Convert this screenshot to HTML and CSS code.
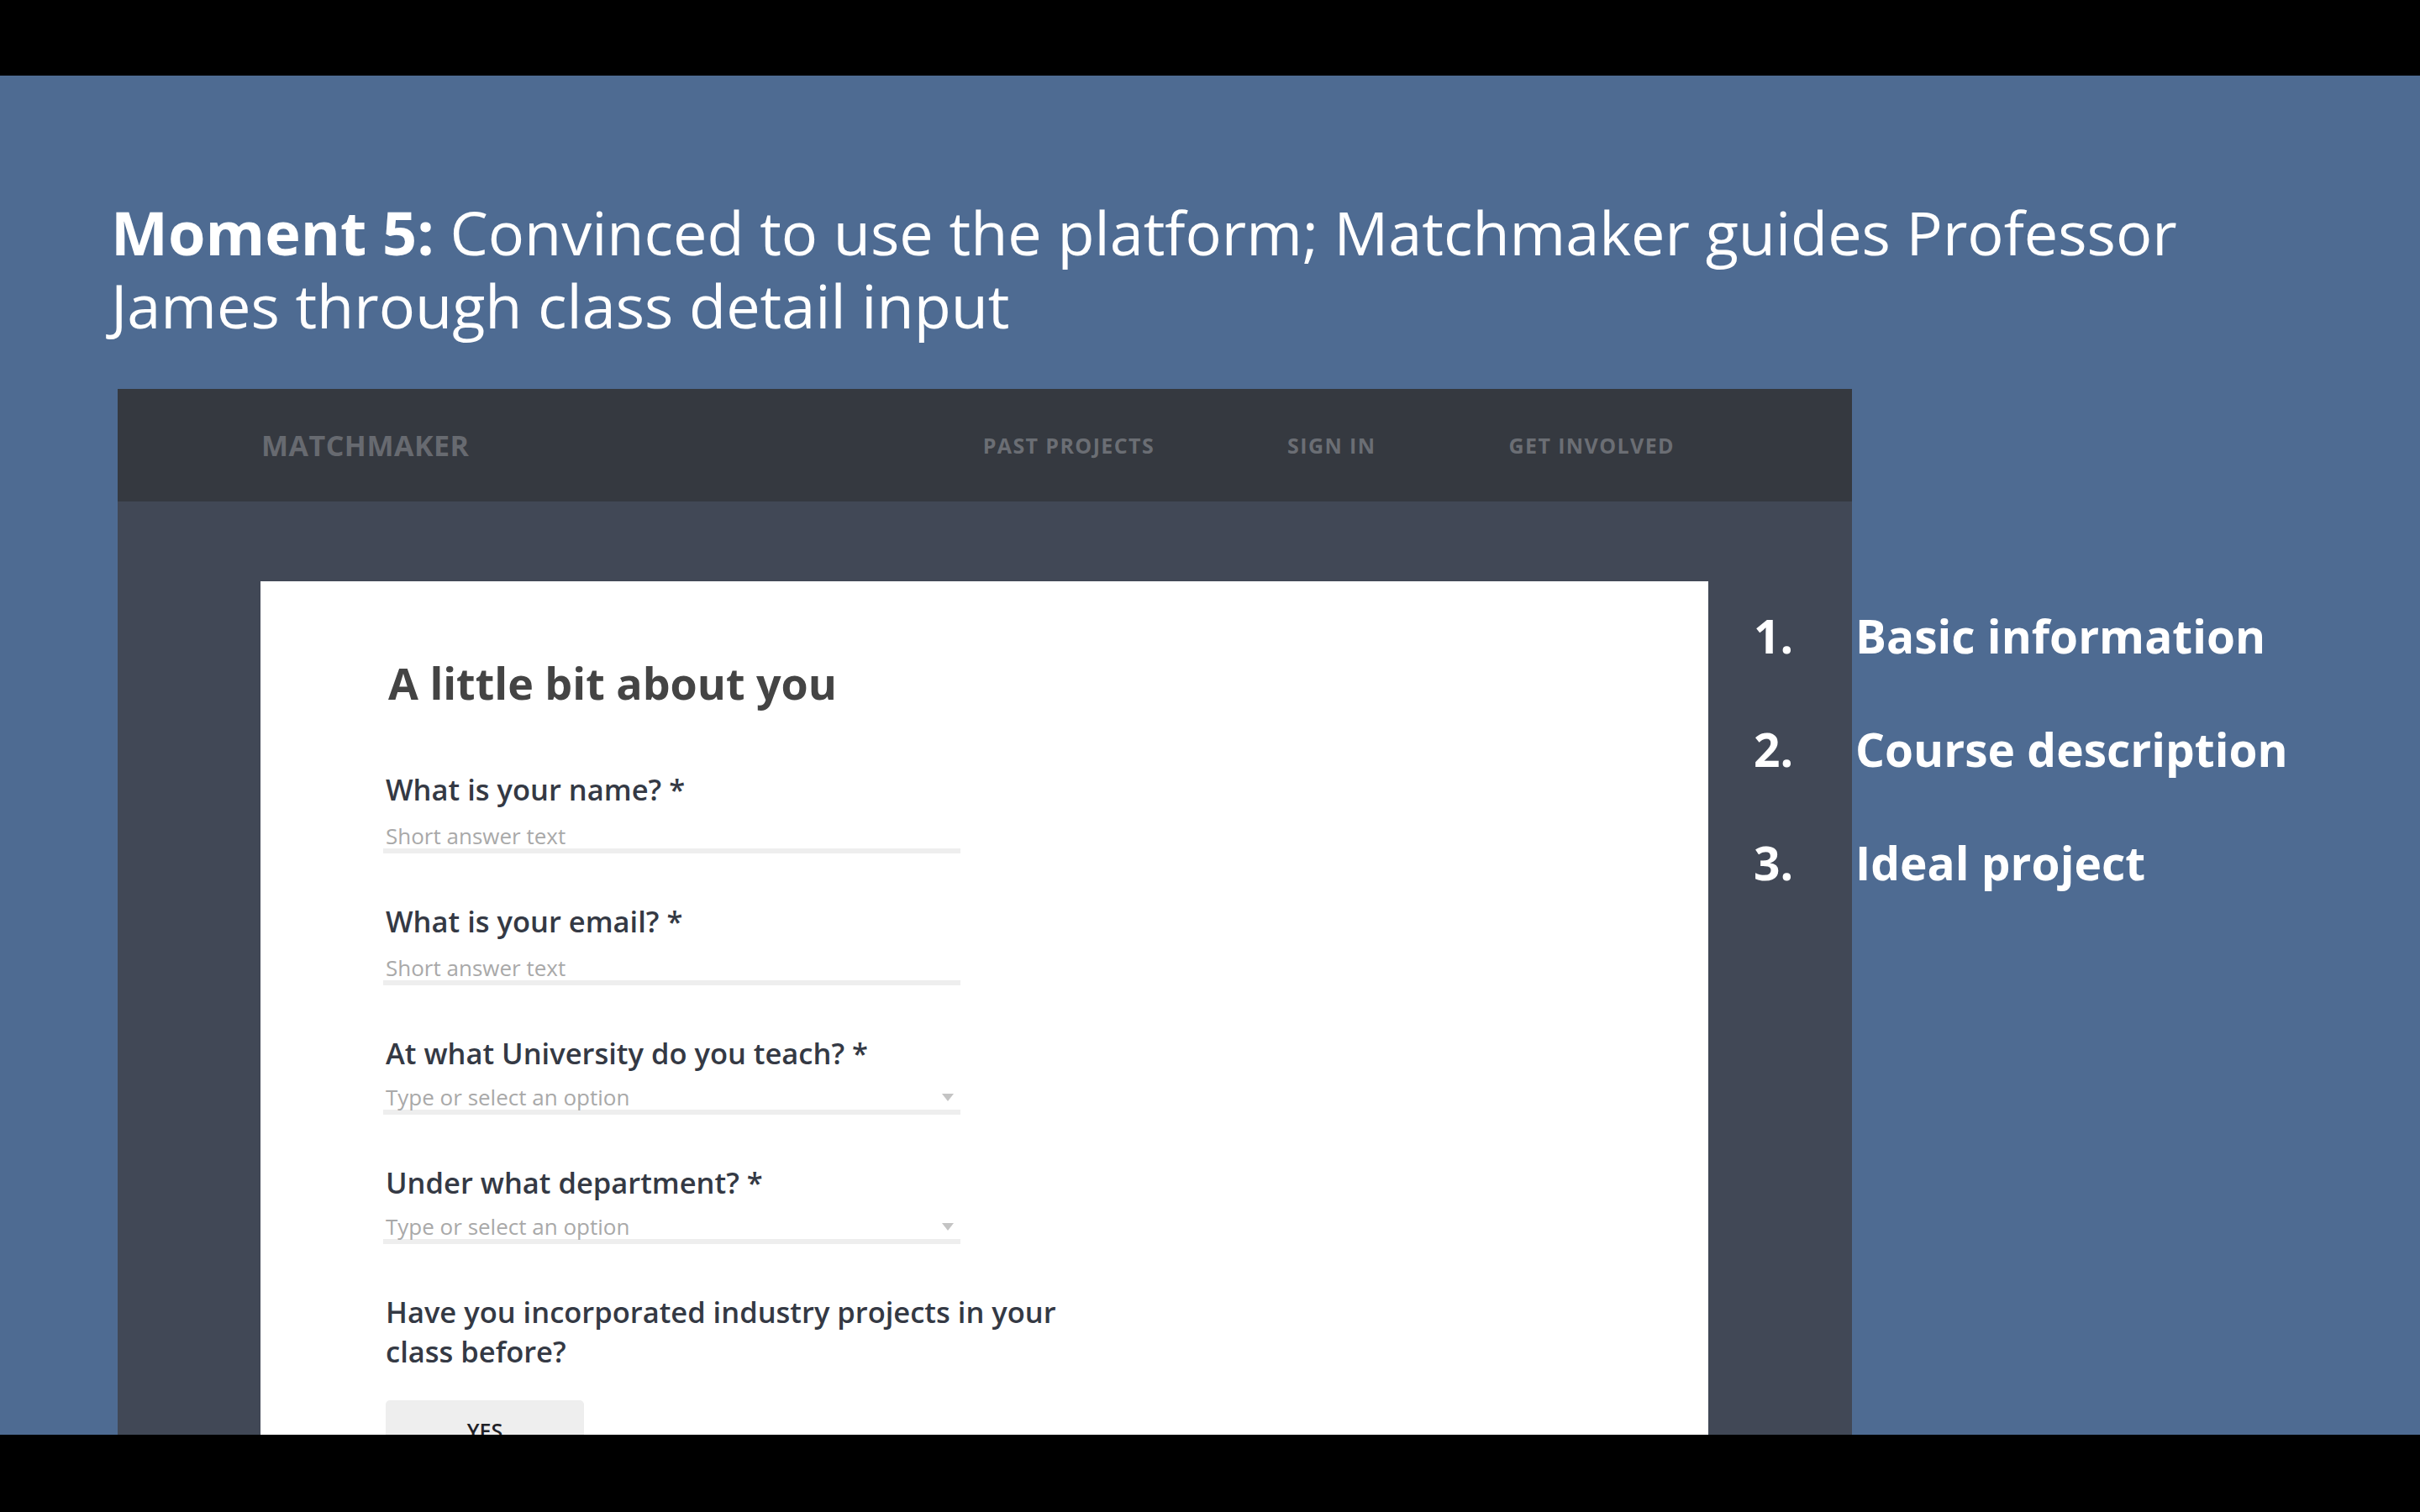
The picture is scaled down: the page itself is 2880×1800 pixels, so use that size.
FILE: index.html
```html
<!DOCTYPE html>
<html lang="en">
<head>
<meta charset="utf-8">
<title>Moment 5</title>
<link rel="stylesheet" href="styles.css">
</head>
<body>
<div class="letterbox top"></div>
<main class="slide">
  <h1 class="title"><strong>Moment 5:</strong> Convinced to use the platform; Matchmaker guides Professor James through class detail input</h1>
  <div class="stage">
    <section class="mockup">
      <header class="nav">
        <div class="brand">MATCHMAKER</div>
        <nav class="links">
          <span>PAST PROJECTS</span>
          <span>SIGN IN</span>
          <span>GET INVOLVED</span>
        </nav>
      </header>
      <div class="canvas">
        <div class="card">
          <h2 class="card-title">A little bit about you</h2>
          <div class="field">
            <div class="label">What is your name? *</div>
            <div class="input">Short answer text</div>
          </div>
          <div class="field">
            <div class="label">What is your email? *</div>
            <div class="input">Short answer text</div>
          </div>
          <div class="field">
            <div class="label">At what University do you teach? *</div>
            <div class="input select"><span>Type or select an option</span><i class="caret"></i></div>
          </div>
          <div class="field">
            <div class="label">Under what department? *</div>
            <div class="input select"><span>Type or select an option</span><i class="caret"></i></div>
          </div>
          <div class="field">
            <div class="label wide">Have you incorporated industry projects in your class before?</div>
            <div class="buttons">
              <div class="btn">YES</div>
            </div>
          </div>
        </div>
      </div>
    </section>
    <ol class="steps">
      <li><span class="num">1.</span><span>Basic information</span></li>
      <li><span class="num">2.</span><span>Course description</span></li>
      <li><span class="num">3.</span><span>Ideal project</span></li>
    </ol>
  </div>
</main>
<div class="letterbox bottom"></div>
</body>
</html>
```
FILE: styles.css
```css
* { box-sizing: border-box; margin: 0; padding: 0; }
html, body { width: 2880px; height: 1800px; overflow: hidden; }
body {
  background: #000;
  font-family: "Open Sans", "Noto Sans", "Liberation Sans", sans-serif;
  display: flex;
  flex-direction: column;
}
.letterbox { background: #000; flex: none; }
.letterbox.top { height: 90px; }
.letterbox.bottom { height: 92px; }

.slide {
  height: 1618px;
  flex: none;
  background: #4e6b92;
  overflow: hidden;
  padding: 143px 0 0 132px;
}
.title {
  font-size: 72px;
  line-height: 87px;
  font-weight: 400;
  color: #fff;
  width: 2620px;
}
.title strong { font-weight: 700; }

.stage {
  display: flex;
  align-items: flex-start;
  margin-top: 56px;
  margin-left: 8px;
}
.mockup {
  width: 2064px;
  flex: none;
  background: #414856;
}
.nav {
  height: 134px;
  background: #353940;
  display: flex;
  align-items: center;
  justify-content: space-between;
  padding: 0 211px 0 171px;
}
.brand {
  font-size: 34px;
  font-weight: 700;
  color: #676a70;
  letter-spacing: 0.5px;
}
.links {
  display: flex;
  gap: 158px;
  font-size: 25px;
  font-weight: 700;
  letter-spacing: 1.4px;
  color: #6b6e74;
}
.canvas {
  padding: 95px 171px 0 170px;
  height: 1200px;
}
.card {
  background: #fff;
  height: 1200px;
  padding: 84px 0 0 146px;
}
.card-title {
  font-size: 52px;
  line-height: 74px;
  font-weight: 700;
  color: #444;
  margin: 0 0 66px 6px;
}
.field { margin-bottom: 57px; width: 687px; }
.label {
  font-size: 34.5px;
  line-height: 47px;
  font-weight: 600;
  color: #343944;
  padding-left: 3px;
  white-space: nowrap;
}
.label.wide { white-space: normal; width: 820px; }
.input {
  margin-top: 17px;
  font-size: 26px;
  line-height: 30px;
  color: #a9a9a9;
  border-bottom: 6px solid #eeeeee;
  padding-left: 3px;
}
.input.select {
  margin-top: 14px;
  display: flex;
  justify-content: space-between;
  align-items: center;
  padding-right: 8px;
}
.caret {
  width: 0; height: 0;
  border-left: 7px solid transparent;
  border-right: 7px solid transparent;
  border-top: 9px solid #c4c4c4;
}
.buttons { margin-top: 35px; display: flex; gap: 24px; }
.btn {
  width: 236px;
  height: 80px;
  margin-left: 3px;
  background: #eeeeee;
  border-radius: 5px;
  text-align: center;
  font-size: 25px;
  line-height: 30px;
  font-weight: 600;
  color: #1f2126;
  padding-top: 21px;
}

.steps {
  list-style: none;
  margin: 226px 0 0 -117px;
  color: #fff;
  font-size: 55px;
  line-height: 135px;
  font-weight: 700;
  position: relative;
}
.steps li { display: flex; white-space: nowrap; }
.steps .num { width: 121px; flex: none; }
```
